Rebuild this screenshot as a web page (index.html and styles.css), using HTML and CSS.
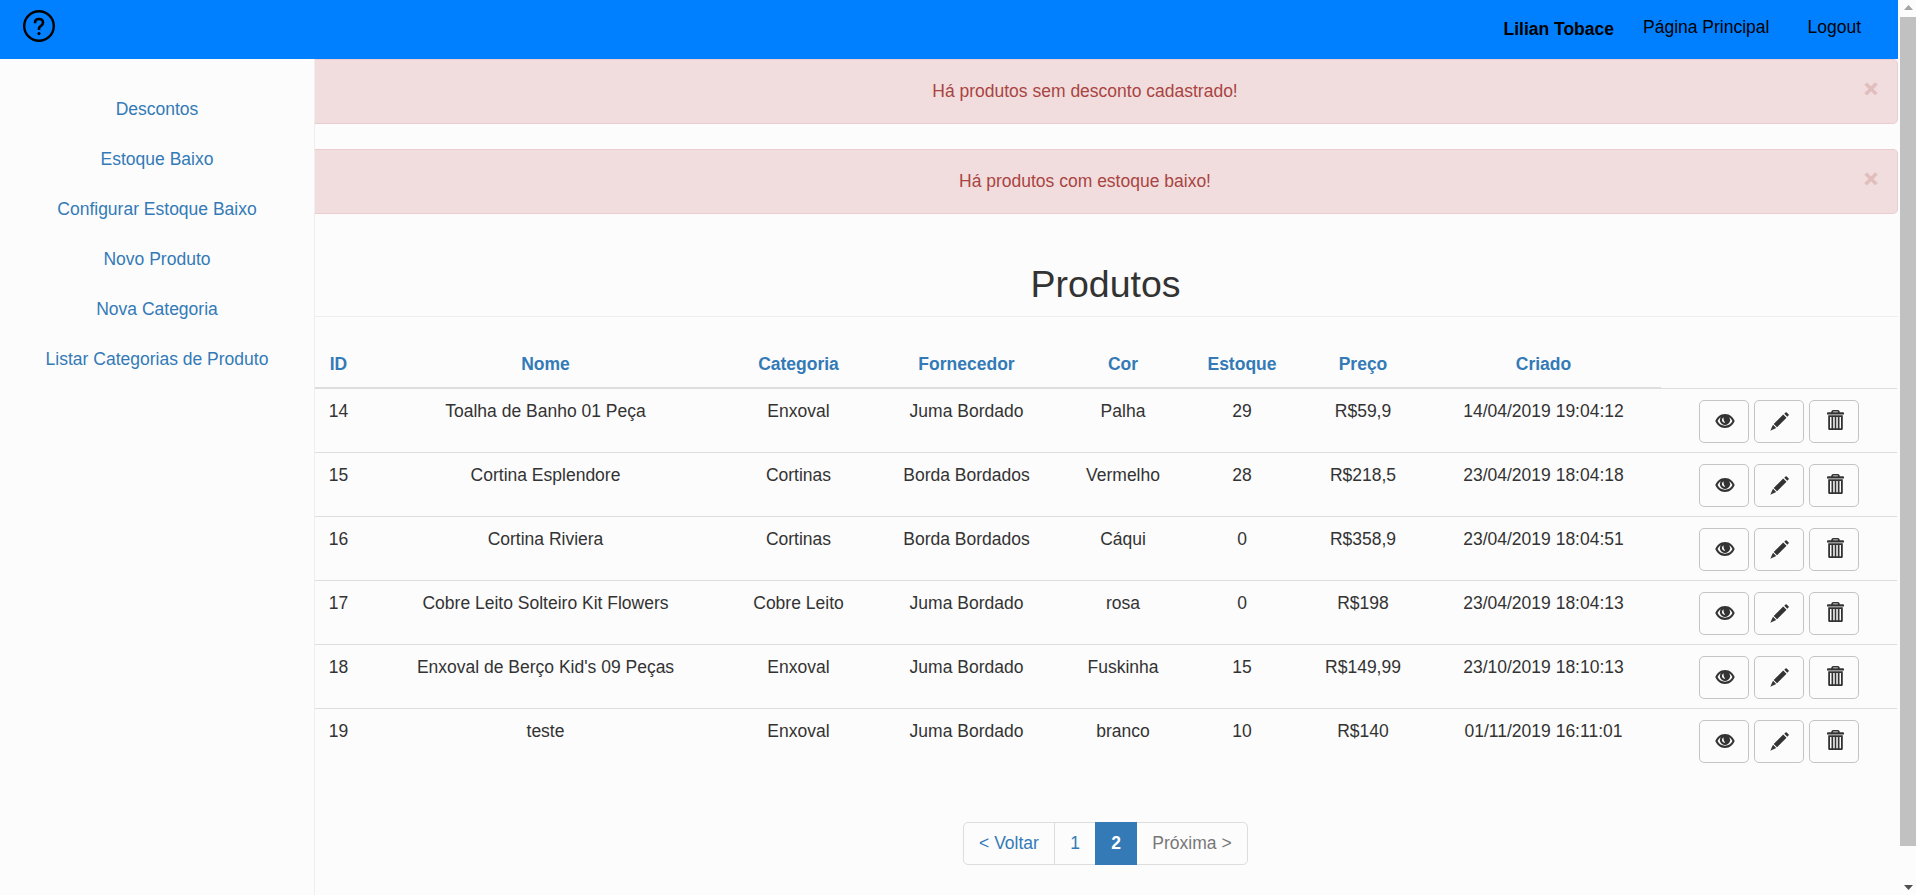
FILE: index.html
```html
<!DOCTYPE html>
<html lang="pt-BR">
<head>
<meta charset="utf-8">
<title>Produtos</title>
<link rel="stylesheet" href="styles.css">
</head>
<body>
<svg class="sprite" width="0" height="0">
  <symbol id="eye" viewBox="0 0 20 14">
    <path fill-rule="evenodd" d="M10 0C15 0 18.300 3.500 19.700 7C18.300 10.500 15 14 10 14C5 14 1.700 10.500.300 7C1.700 3.500 5 0 10 0ZM5.800 3.200C4.300 4.200 3.300 5.500 2.600 7C4 9.800 6.500 11.700 10 11.700C13.500 11.700 16 9.800 17.400 7C16.700 5.500 15.700 4.200 14.200 3.200A5 5 0 1 1 5.800 3.200ZM8.600 3.600C7.200 4.200 6.500 5.700 7.300 7.300C7.900 8.400 9.200 9 10.200 8.500C8.900 7.400 8.300 5.700 8.600 3.600Z"/>
  </symbol>
  <symbol id="pencil" viewBox="0 0 19 19">
    <path d="M14.300 1.700 15.500.500Q16.100 0 16.700.500L18.500 2.300Q19 2.900 18.500 3.500L17.300 4.700ZM13.200 2.500 16.500 5.800 7 15.300 3.700 12ZM3 12.800 6.200 16 .300 18.700Z"/>
  </symbol>
  <symbol id="trash" viewBox="0 0 17 20">
    <path fill-rule="evenodd" d="M4.300 2.300V1.600Q4.600 0 6.200 0H10.800Q12.400 0 12.700 1.600V2.300H16Q17 2.300 17 3.300V4.600H0V3.300Q0 2.300 1 2.300ZM6.200 2.300H10.800V1.500H6.200ZM1.200 5.300H15.800V18.800Q15.800 20 14.600 20H2.400Q1.200 20 1.200 18.800ZM3 7V18.200H4.500V7ZM6.200 7V18.200H7.700V7ZM9.300 7V18.200H10.800V7ZM12.500 7V18.200H14V7Z"/>
  </symbol>
</svg>

<div class="app">
  <header class="topbar">
    <svg class="help" viewBox="0 0 32 32" width="32" height="32">
      <circle cx="16" cy="16" r="14.800"/>
      <path d="M12 13.200V12.800Q12 9 16 9Q20 9 20 12.500Q20 14.500 18 15.800Q16 17 16 18.600V20"/>
      <circle class="dot" cx="16" cy="23.600" r="1.600"/>
    </svg>
    <nav class="usernav">
      <strong>Lilian Tobace</strong>
      <a>Página Principal</a>
      <a>Logout</a>
    </nav>
  </header>
  <div class="body">
    <aside class="sidebar">
      <a>Descontos</a>
      <a>Estoque Baixo</a>
      <a>Configurar Estoque Baixo</a>
      <a>Novo Produto</a>
      <a>Nova Categoria</a>
      <a>Listar Categorias de Produto</a>
    </aside>
    <main class="content">
      <div class="alert"><p>Há produtos sem desconto cadastrado!</p><span class="close">×</span></div>
      <div class="alert"><p>Há produtos com estoque baixo!</p><span class="close">×</span></div>
      <h2>Produtos</h2>
      <table>
        <colgroup><col class="c-id"><col class="c-nome"><col class="c-cat"><col class="c-forn"><col class="c-cor"><col class="c-est"><col class="c-preco"><col class="c-criado"><col class="c-acoes"></colgroup>
        <thead>
          <tr><th>ID</th><th>Nome</th><th>Categoria</th><th>Fornecedor</th><th>Cor</th><th>Estoque</th><th>Preço</th><th class="created">Criado</th><td class="blank"></td></tr>
        </thead>
        <tbody>
          <tr><td>14</td><td>Toalha de Banho 01 Peça</td><td>Enxoval</td><td>Juma Bordado</td><td>Palha</td><td>29</td><td>R$59,9</td><td class="created">14/04/2019 19:04:12</td><td><div class="actions"><a class="btn"><svg class="i-eye"><use href="#eye"/></svg></a><a class="btn"><svg class="i-pencil"><use href="#pencil"/></svg></a><a class="btn"><svg class="i-trash"><use href="#trash"/></svg></a></div></td></tr>
          <tr><td>15</td><td>Cortina Esplendore</td><td>Cortinas</td><td>Borda Bordados</td><td>Vermelho</td><td>28</td><td>R$218,5</td><td class="created">23/04/2019 18:04:18</td><td><div class="actions"><a class="btn"><svg class="i-eye"><use href="#eye"/></svg></a><a class="btn"><svg class="i-pencil"><use href="#pencil"/></svg></a><a class="btn"><svg class="i-trash"><use href="#trash"/></svg></a></div></td></tr>
          <tr><td>16</td><td>Cortina Riviera</td><td>Cortinas</td><td>Borda Bordados</td><td>Cáqui</td><td>0</td><td>R$358,9</td><td class="created">23/04/2019 18:04:51</td><td><div class="actions"><a class="btn"><svg class="i-eye"><use href="#eye"/></svg></a><a class="btn"><svg class="i-pencil"><use href="#pencil"/></svg></a><a class="btn"><svg class="i-trash"><use href="#trash"/></svg></a></div></td></tr>
          <tr><td>17</td><td>Cobre Leito Solteiro Kit Flowers</td><td>Cobre Leito</td><td>Juma Bordado</td><td>rosa</td><td>0</td><td>R$198</td><td class="created">23/04/2019 18:04:13</td><td><div class="actions"><a class="btn"><svg class="i-eye"><use href="#eye"/></svg></a><a class="btn"><svg class="i-pencil"><use href="#pencil"/></svg></a><a class="btn"><svg class="i-trash"><use href="#trash"/></svg></a></div></td></tr>
          <tr><td>18</td><td>Enxoval de Berço Kid's 09 Peças</td><td>Enxoval</td><td>Juma Bordado</td><td>Fuskinha</td><td>15</td><td>R$149,99</td><td class="created">23/10/2019 18:10:13</td><td><div class="actions"><a class="btn"><svg class="i-eye"><use href="#eye"/></svg></a><a class="btn"><svg class="i-pencil"><use href="#pencil"/></svg></a><a class="btn"><svg class="i-trash"><use href="#trash"/></svg></a></div></td></tr>
          <tr><td>19</td><td>teste</td><td>Enxoval</td><td>Juma Bordado</td><td>branco</td><td>10</td><td>R$140</td><td class="created">01/11/2019 16:11:01</td><td><div class="actions"><a class="btn"><svg class="i-eye"><use href="#eye"/></svg></a><a class="btn"><svg class="i-pencil"><use href="#pencil"/></svg></a><a class="btn"><svg class="i-trash"><use href="#trash"/></svg></a></div></td></tr>
        </tbody>
      </table>
      <div class="pagination">
        <a class="prev">&lt; Voltar</a>
        <a class="page">1</a>
        <a class="page active">2</a>
        <a class="next">Próxima &gt;</a>
      </div>
    </main>
  </div>
</div>
<div class="scrollbar">
  <svg class="arrow-up" viewBox="0 0 9 5"><path d="M0 5 4.500 0 9 5Z"/></svg>
  <div class="thumb"></div>
  <svg class="arrow-down" viewBox="0 0 9 5"><path d="M0 0H9L4.500 5Z"/></svg>
</div>
</body>
</html>
```
FILE: styles.css
```css
* { box-sizing: border-box; }

body {
  margin: 0;
  height: 895px;
  display: flex;
  overflow: hidden;
  background: #fcfcfc;
  color: #333;
  font: 17.5px/25px "Liberation Sans", Arial, sans-serif;
}

.sprite { position: absolute; }

.app {
  width: 1898px;
  height: 895px;
  display: flex;
  flex-direction: column;
}

/* Top bar */
.topbar {
  height: 59px;
  flex: none;
  display: flex;
  justify-content: space-between;
  padding: 10px 37px 0 23px;
  background: #0080ff;
  color: #000;
}
.help { fill: none; stroke: #000; stroke-width: 2.4; }
.help path { stroke-width: 2.6; }
.help .dot { fill: #000; stroke: none; }
.usernav { display: flex; padding-top: 5px; }
.usernav strong { margin: 2px 29px 0 0; }
.usernav a + a { margin-left: 38px; }

.body { flex: 1; display: flex; min-height: 0; }

/* Side menu */
.sidebar {
  width: 315px;
  flex: none;
  display: flex;
  flex-direction: column;
  padding-top: 25px;
  border-right: 1px solid #eee;
  text-align: center;
}
.sidebar a { padding: 12.5px 0; color: #337ab7; }

.content { flex: 1; min-width: 0; }

/* Alerts */
.alert {
  height: 65px;
  display: flex;
  align-items: center;
  margin-bottom: 25px;
  border: 1px solid #ebccd1;
  border-left: 0;
  border-radius: 0 5px 5px 0;
  background: #f1dddd;
  color: #a94442;
}
.alert p { flex: 1; margin: 0; padding-left: 1px; text-align: center; }
.close {
  width: 43px;
  padding: 0 0 6px 10px;
  font-size: 24px;
  font-weight: bold;
  line-height: 26px;
  -webkit-text-stroke: .8px #a94442;
  text-shadow: 0 1px 0 #fff;
  opacity: .2;
}

h2 {
  height: 78px;
  margin: 0;
  padding: 25px 2px 0 0;
  border-bottom: 1px solid #eee;
  font-size: 37.5px;
  font-weight: normal;
  line-height: 41px;
  text-align: center;
}

/* Products table */
table {
  width: 1582px;
  margin-top: 25px;
  table-layout: fixed;
  border-collapse: collapse;
  text-align: center;
}
.c-id { width: 47px; }
.c-nome { width: 367px; }
.c-cat { width: 139px; }
.c-forn { width: 197px; }
.c-cor { width: 116px; }
.c-est { width: 122px; }
.c-preco { width: 120px; }
.c-criado { width: 238px; }
.c-acoes { width: 236px; }
th {
  padding: 10px 0;
  border-bottom: 2px solid #ddd;
  color: #337ab7;
}
td {
  height: 64px;
  padding: 10px 0 9px;
  border-top: 1px solid #ddd;
  vertical-align: top;
}
.created { padding-left: 3px; }
td.blank { height: auto; border-top: 0; }
.actions { display: flex; gap: 5px; padding: 1px 0 0 38px; }
.btn {
  width: 50px;
  height: 43px;
  display: flex;
  align-items: center;
  justify-content: center;
  border: 1px solid #c4c4c4;
  border-radius: 5px;
  fill: #333;
}
.i-eye { width: 20px; height: 14px; margin-left: 2px; }
.i-pencil { width: 19px; height: 19px; }
.i-trash { width: 17px; height: 20px; margin: -3px 0 0 2px; }

/* Pagination */
.pagination {
  width: 285px;
  height: 43px;
  display: flex;
  margin: 50px 0 0 648px;
  border: 1px solid #ddd;
  border-radius: 5px;
  line-height: 41px;
  text-align: center;
  color: #337ab7;
}
.prev { width: 91px; border-right: 1px solid #ddd; }
.page { width: 40px; }
.page.active {
  width: 42px;
  margin: -1px 0;
  background: #337ab7;
  color: #fff;
  font-weight: bold;
  line-height: 43px;
}
.next { flex: 1; color: #777; }

/* Scroll bar */
.scrollbar {
  width: 16px;
  height: 895px;
  display: flex;
  flex-direction: column;
  align-items: center;
  margin-left: 2px;
  padding: 5px 0;
}
.scrollbar svg { width: 9px; height: 5px; flex: none; }
.arrow-up { fill: #a3a3a3; }
.thumb { width: 16px; height: 829px; margin-top: 7px; background: #c1c1c1; }
.arrow-down { margin-top: auto; fill: #505050; }
```
